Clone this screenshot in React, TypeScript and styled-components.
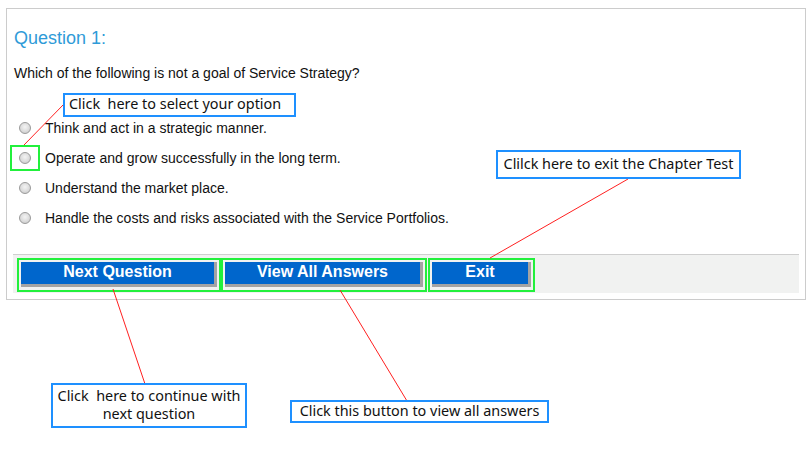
import React from "react";
import styled, { createGlobalStyle } from "styled-components";

const GlobalStyle = createGlobalStyle`
  html, body { margin: 0; padding: 0; background: #ffffff; }
  body { font-family: "Liberation Sans", Arial, sans-serif; color: #111; }
`;

const Page = styled.div`
  position: relative;
  width: 812px;
  height: 450px;
  padding: 8px 6px 0 6px;
  box-sizing: border-box;
`;

const Panel = styled.div`
  width: 800px;
  height: 292px;
  box-sizing: border-box;
  border: 1px solid #cccccc;
  padding: 0 6px 6px 6px;
  display: flex;
  flex-direction: column;
`;

const Body = styled.div`
  flex: 1;
  padding: 19px 0 0 1px;
  display: flex;
  flex-direction: column;
`;

const Title = styled.h2`
  margin: 0;
  font-size: 18px;
  line-height: 20px;
  font-weight: normal;
  color: #2f9bd8;
`;

const Prompt = styled.p`
  margin: 17px 0 0 0;
  font-size: 14px;
  line-height: 16px;
  color: #111;
`;

const Options = styled.div`
  margin-top: 32px;
  display: flex;
  flex-direction: column;
`;

const OptionRow = styled.label`
  height: 30px;
  display: flex;
  align-items: center;
  gap: 14px;
  padding-left: 5px;
  font-size: 14px;
  color: #111;
`;

const Radio = styled.input`
  appearance: none;
  margin: 0;
  width: 12px;
  height: 12px;
  border-radius: 50%;
  border: 1px solid #9a9a9a;
  box-sizing: border-box;
  background: radial-gradient(circle at 50% 40%, #f4f4f4 0%, #dcdcdc 55%, #c4c4c4 100%);
`;

const Footer = styled.div`
  height: 39px;
  box-sizing: border-box;
  border-top: 1px solid #cfcfcf;
  background: #f1f2f1;
  padding: 3px 0 0 4px;
  display: flex;
  align-items: flex-start;
`;

const Frame = styled.div<{ $gap?: number }>`
  border: 2px solid #22f03c;
  padding: 2px 2px 3px 2px;
  margin-left: ${(p) => p.$gap ?? 0}px;
  display: flex;
`;

const ActionButton = styled.button<{ $w: number }>`
  width: ${(p) => p.$w}px;
  height: 25px;
  box-sizing: border-box;
  margin: 0;
  padding: 0 0 2px 0;
  border: none;
  border-right: 3px solid #a3a3a3;
  border-bottom: 3px solid #a3a3a3;
  background: #0066cc;
  color: #ffffff;
  font-family: "Liberation Sans", Arial, sans-serif;
  font-weight: bold;
  font-size: 16px;
  line-height: 20px;
  text-align: center;
  cursor: pointer;
`;

const Highlight = styled.div`
  position: absolute;
  left: 10px;
  top: 145px;
  width: 30px;
  height: 26px;
  box-sizing: border-box;
  border: 2px solid #22f03c;
`;

const Callout = styled.div<{ $x: number; $y: number; $w: number; $h: number; $left?: boolean }>`
  position: absolute;
  left: ${(p) => p.$x}px;
  top: ${(p) => p.$y}px;
  width: ${(p) => p.$w}px;
  height: ${(p) => p.$h}px;
  box-sizing: border-box;
  border: 2px solid #1e90ff;
  background: #ffffff;
  padding: 0 0 2px ${(p) => (p.$left ? 4 : 0)}px;
  font-family: "Noto Sans", "Open Sans", sans-serif;
  font-size: 14.4px;
  line-height: 18px;
  color: #111;
  display: flex;
  align-items: center;
  justify-content: ${(p) => (p.$left ? "flex-start" : "center")};
  text-align: center;
  white-space: pre-wrap;
`;

const Lines = styled.svg`
  position: absolute;
  left: 0;
  top: 0;
  width: 812px;
  height: 450px;
  pointer-events: none;
`;

const options = [
  "Think and act in a strategic manner.",
  "Operate and grow successfully in the long term.",
  "Understand the market place.",
  "Handle the costs and risks associated with the Service Portfolios.",
];

export default function App() {
  return (
    <>
      <GlobalStyle />
      <Page>
        <Panel>
          <Body>
            <Title>Question 1:</Title>
            <Prompt>Which of the following is not a goal of Service Strategy?</Prompt>
            <Options>
              {options.map((o) => (
                <OptionRow key={o}>
                  <Radio type="radio" name="q1" />
                  <span>{o}</span>
                </OptionRow>
              ))}
            </Options>
          </Body>
          <Footer>
            <Frame>
              <ActionButton $w={196}>Next Question</ActionButton>
            </Frame>
            <Frame>
              <ActionButton $w={198}>View All Answers</ActionButton>
            </Frame>
            <Frame $gap={1}>
              <ActionButton $w={99}>Exit</ActionButton>
            </Frame>
          </Footer>
        </Panel>

        <Highlight />

        <Lines viewBox="0 0 812 450">
          <g stroke="#ff2020" strokeWidth="1" fill="none">
            <line x1="64" y1="104" x2="24" y2="145" />
            <line x1="628" y1="179" x2="490" y2="258" />
            <line x1="113" y1="289" x2="145" y2="384" />
            <line x1="340" y1="290" x2="407" y2="401" />
          </g>
        </Lines>

        <Callout $x={63} $y={93} $w={233} $h={24} $left>
          {"Click  here to select your option"}
        </Callout>
        <Callout $x={496} $y={150} $w={245} $h={29}>
          Clilck here to exit the Chapter Test
        </Callout>
        <Callout $x={51} $y={383} $w={196} $h={45}>
          {"Click  here to continue with\nnext question"}
        </Callout>
        <Callout $x={290} $y={400} $w={259} $h={23}>
          Click this button to view all answers
        </Callout>
      </Page>
    </>
  );
}
